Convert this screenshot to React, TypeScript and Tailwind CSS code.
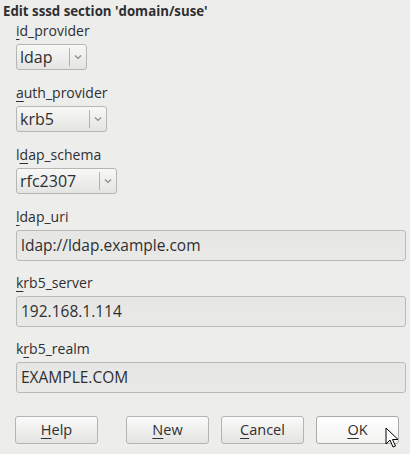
import { ReactNode } from "react";

const font = { fontFamily: '"Open Sans", "Liberation Sans", sans-serif' };

function Mnemonic({ text, index }: { text: string; index: number }) {
  return (
    <>
      {text.slice(0, index)}
      <span className="underline decoration-1 underline-offset-[3px]">
        {text[index]}
      </span>
      {text.slice(index + 1)}
    </>
  );
}

function Label({ children }: { children: ReactNode }) {
  return (
    <div className="h-[20px] text-[14px] leading-[20px] text-[#2e2f30]">
      {children}
    </div>
  );
}

function Combo({ value, width }: { value: string; width: string }) {
  return (
    <div
      className={`mt-[3px] flex h-[26px] items-center rounded-[3px] border border-[#b6b6b3] bg-gradient-to-b from-[#f8f8f7] to-[#e4e4e2] ${width}`}
    >
      <span className="flex-1 pl-[3px] text-[16px] leading-[20px] text-[#2e2f30]">
        {value}
      </span>
      <span className="h-[18px] w-px bg-[#b0b0ad]" />
      <span className="flex w-[16px] items-center justify-center">
        <svg width="8" height="6" viewBox="0 0 8 6">
          <path d="M1 1.5 L4 4.5 L7 1.5" fill="none" stroke="#8a8a88" strokeWidth="1.2" />
        </svg>
      </span>
    </div>
  );
}

function Entry({ value }: { value: string }) {
  return (
    <div className="mt-[3px] flex h-[31px] items-center rounded-[3px] border border-[#b9b9b7] bg-gradient-to-b from-[#e6e6e5] to-[#e9e9e8] pl-[4px] text-[15.5px] text-[#2e2f30]">
      {value}
    </div>
  );
}

function Button({ children, focused }: { children: ReactNode; focused?: boolean }) {
  return (
    <button
      className={`flex h-[28px] w-[83px] items-center justify-center rounded-[3px] border text-[14.5px] text-[#2e2f30] ${
        focused
          ? "border-[#a9a9a7] bg-gradient-to-b from-[#ffffff] to-[#f3f3f2]"
          : "border-[#b4b4b1] bg-gradient-to-b from-[#fbfbfb] to-[#e3e3e1]"
      }`}
    >
      {children}
    </button>
  );
}

export default function App() {
  return (
    <div className="relative h-[454px] w-[410px] bg-[#ededec]" style={font}>
      <div className="h-[21px] pl-[3px] pt-[1px] text-[13.25px] font-bold leading-[20px] text-[#2e2f30]">
        Edit sssd section 'domain/suse'
      </div>
      <div className="pl-[16px] pr-[4px]">
        <Label>
          <Mnemonic text="id_provider" index={0} />
        </Label>
        <Combo value="ldap" width="w-[71px]" />
        <div className="h-[13px]" />
        <Label>
          <Mnemonic text="auth_provider" index={0} />
        </Label>
        <Combo value="krb5" width="w-[91px]" />
        <div className="h-[13px]" />
        <Label>
          <Mnemonic text="ldap_schema" index={1} />
        </Label>
        <Combo value="rfc2307" width="w-[101px]" />
        <div className="h-[13px]" />
        <Label>
          <Mnemonic text="ldap_uri" index={0} />
        </Label>
        <Entry value="ldap://ldap.example.com" />
        <div className="h-[12px]" />
        <Label>
          <Mnemonic text="krb5_server" index={0} />
        </Label>
        <Entry value="192.168.1.114" />
        <div className="h-[12px]" />
        <Label>
          <Mnemonic text="krb5_realm" index={1} />
        </Label>
        <Entry value="EXAMPLE.COM" />
      </div>
      <div className="mt-[23px] flex pl-[15px]">
        <Button>
          <Mnemonic text="Help" index={0} />
        </Button>
        <div className="w-[28px]" />
        <Button>
          <Mnemonic text="New" index={0} />
        </Button>
        <div className="w-[12px]" />
        <Button>
          <Mnemonic text="Cancel" index={0} />
        </Button>
        <div className="w-[12px]" />
        <Button focused>
          <Mnemonic text="OK" index={0} />
        </Button>
      </div>
      <svg
        className="absolute left-[385px] top-[427px]"
        width="14"
        height="22"
        viewBox="0 0 14 22"
      >
        <path
          d="M1 1 L1 17 L5 13 L8 20 L10.5 19 L7.5 12.5 L13 12.5 Z"
          fill="#ffffff"
          stroke="#000000"
          strokeWidth="1"
          strokeLinejoin="round"
        />
      </svg>
    </div>
  );
}
